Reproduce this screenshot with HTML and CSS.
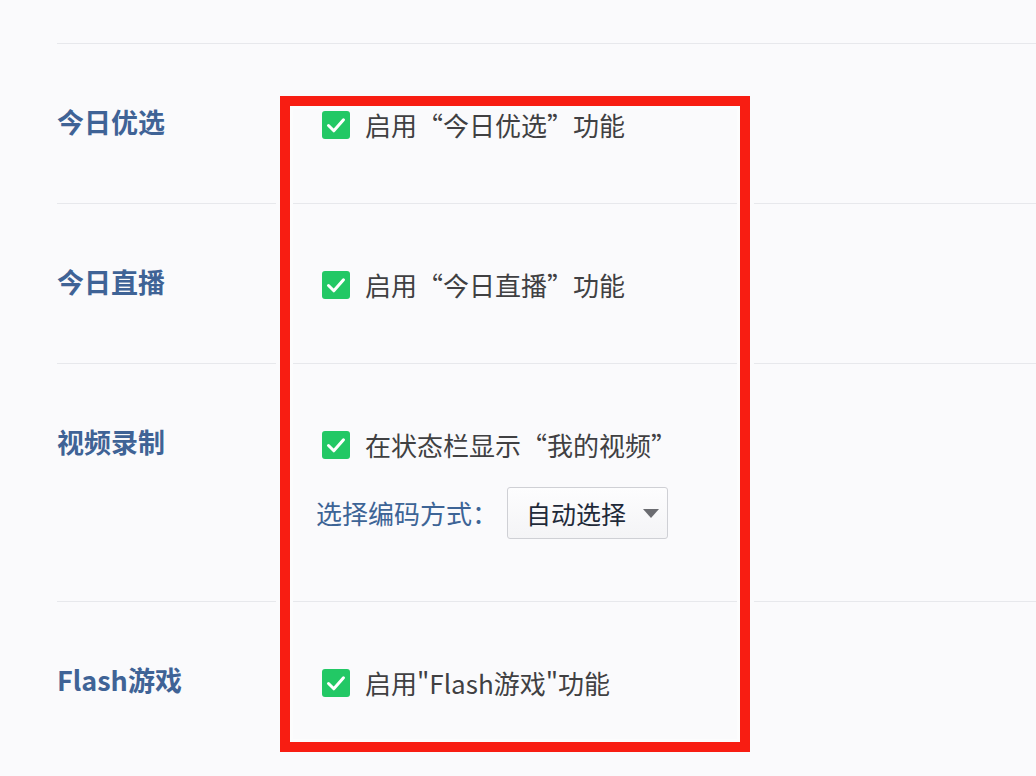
FILE: index.html
```html
<!DOCTYPE html>
<html lang="zh-CN">
<head>
<meta charset="utf-8">
<title>设置</title>
<link rel="stylesheet" href="styles.css">
</head>
<body>
<div class="list">
  <div class="row">
    <div class="label">今日优选</div>
    <div class="options">
      <div class="check-line">
        <span class="box"><svg viewBox="0 0 28 28" width="28" height="28"><path d="M6.5 14.5 L11.8 19.8 L21.5 8.8" fill="none" stroke="#fff" stroke-width="3" stroke-linecap="round" stroke-linejoin="round"/></svg></span>
        <span class="text">启用<span class="q">“</span>今日优选<span class="q">”</span>功能</span>
      </div>
    </div>
  </div>
  <div class="row">
    <div class="label">今日直播</div>
    <div class="options">
      <div class="check-line">
        <span class="box"><svg viewBox="0 0 28 28" width="28" height="28"><path d="M6.5 14.5 L11.8 19.8 L21.5 8.8" fill="none" stroke="#fff" stroke-width="3" stroke-linecap="round" stroke-linejoin="round"/></svg></span>
        <span class="text">启用<span class="q">“</span>今日直播<span class="q">”</span>功能</span>
      </div>
    </div>
  </div>
  <div class="row">
    <div class="label">视频录制</div>
    <div class="options">
      <div class="check-line">
        <span class="box"><svg viewBox="0 0 28 28" width="28" height="28"><path d="M6.5 14.5 L11.8 19.8 L21.5 8.8" fill="none" stroke="#fff" stroke-width="3" stroke-linecap="round" stroke-linejoin="round"/></svg></span>
        <span class="text">在状态栏显示<span class="q">“</span>我的视频<span class="q">”</span></span>
      </div>
      <div class="select-line">
        <span class="select-label">选择编码方式：</span>
        <span class="select"><span class="select-value">自动选择</span><span class="arrow"></span></span>
      </div>
    </div>
  </div>
  <div class="row">
    <div class="label">Flash游戏</div>
    <div class="options">
      <div class="check-line">
        <span class="box"><svg viewBox="0 0 28 28" width="28" height="28"><path d="M6.5 14.5 L11.8 19.8 L21.5 8.8" fill="none" stroke="#fff" stroke-width="3" stroke-linecap="round" stroke-linejoin="round"/></svg></span>
        <span class="text">启用"Flash游戏"功能</span>
      </div>
    </div>
  </div>
</div>
<div class="highlight"></div>
</body>
</html>
```

FILE: styles.css
```css
html, body {
  margin: 0;
  padding: 0;
}
body {
  background: #fafafc;
  width: 1036px;
  height: 776px;
  overflow: hidden;
  position: relative;
  font-family: "Noto Sans CJK SC", "Noto Sans", sans-serif;
}
.list {
  padding-top: 43px;
  margin-left: 57px;
}
.row {
  display: flex;
  border-top: 1px solid #e7e8ec;
  padding-bottom: 58px;
}
.row:last-child {
  padding-bottom: 100px;
}
.label {
  width: 265px;
  flex: none;
  padding-top: 58px;
  font-size: 27px;
  line-height: 40px;
  font-weight: 700;
  color: #3f6396;
}
.options {
  padding-top: 61px;
}
.check-line {
  display: flex;
  align-items: center;
  height: 40px;
}
.box {
  width: 28px;
  height: 28px;
  border-radius: 3px;
  background: #22c865;
  display: block;
  flex: none;
}
.box svg {
  display: block;
}
.text {
  margin-left: 15px;
  font-size: 26px;
  line-height: 40px;
  color: #404042;
  white-space: nowrap;
}
.q {
  font-feature-settings: "fwid" 1;
}
.select-line {
  display: flex;
  align-items: center;
  margin: 22px 0 4px -6px;
}
.select-label {
  font-size: 26px;
  line-height: 40px;
  color: #3d6496;
  width: 191px;
  white-space: nowrap;
}
.select {
  display: flex;
  align-items: center;
  box-sizing: border-box;
  width: 161px;
  height: 52px;
  border: 1px solid #cfd0d5;
  border-radius: 3px;
  background: linear-gradient(#fdfdfe, #f4f4f6);
  padding-left: 18px;
}
.select-value {
  font-size: 25px;
  line-height: 40px;
  color: #1f2a39;
}
.arrow {
  margin-left: 17px;
  width: 0;
  height: 0;
  border-left: 8px solid transparent;
  border-right: 8px solid transparent;
  border-top: 9px solid #6b6c71;
}
.highlight {
  position: absolute;
  left: 280px;
  top: 96px;
  width: 450px;
  height: 636px;
  border: 10px solid #f81d12;
  box-shadow: 0 0 0 4px #fafafc, inset 0 0 0 3px #fcfcfd;
}
```
